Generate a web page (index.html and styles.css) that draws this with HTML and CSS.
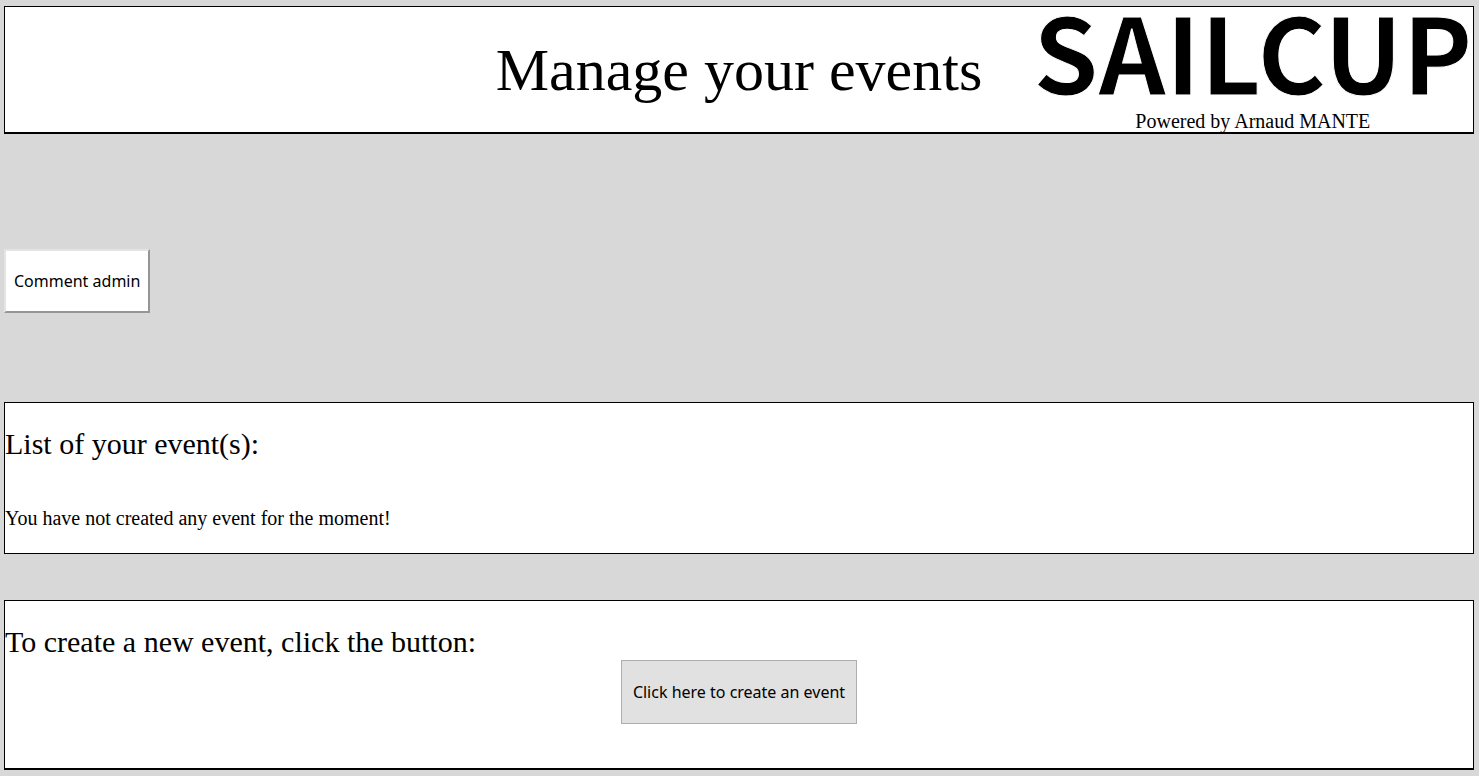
FILE: index.html
```html
<!DOCTYPE html>
<html lang="en">
<head>
    <meta charset="UTF-8">
    <meta name="viewport" content="width=device-width, initial-scale=1.0">
    <title>Manage your events</title>
    <link rel="stylesheet" href="styles.css">
</head>
<body>
    <header class="header">
        <h1 class="title">Manage your events</h1>
        <div class="brand">
            <div class="logo">SAILCUP</div>
            <div>Powered by Arnaud MANTE</div>
        </div>
    </header>

    <button type="button" class="button comment">Comment admin</button>

    <section class="box">
        <h2>List of your event(s):</h2>
        <p class="empty">You have not created any event for the moment!</p>
    </section>

    <section class="box box-create">
        <h2>To create a new event, click the button:</h2>
        <button type="button" class="button create">Click here to create an event</button>
    </section>
</body>
</html>
```
FILE: styles.css
```css
* {
    box-sizing: border-box;
}

body {
    margin: 6px 5px 6px 4px;
    background-color: #d8d8d8;
    color: black;
    font-family: "Liberation Serif", "Times New Roman", serif;
    font-size: 20px;
    line-height: 22px;
}

.header {
    display: grid;
    grid-template-columns: 30% 1fr 30%;
    background-color: white;
    border: 1px solid black;
    border-bottom-width: 2px;
}

.title {
    grid-column: 2;
    align-self: center;
    margin: 0;
    font-size: 60px;
    font-weight: normal;
    line-height: 68px;
    text-align: center;
    white-space: nowrap;
}

.brand {
    grid-column: 3;
    text-align: center;
}

.logo {
    margin-bottom: 18px;
    font-family: "Noto Sans CJK JP", sans-serif;
    font-size: 105px;
    font-weight: bold;
    line-height: 85px;
    white-space: nowrap;
    -webkit-text-stroke: 1px white; /* thins the letters a little */
}

.button {
    display: block;
    height: 64px;
    color: black;
    font-family: "Noto Sans", Tahoma, sans-serif;
    font-size: 16px;
    cursor: pointer;
}

.comment {
    margin: 115px 0 89px;
    padding: 0 8px;
    background-color: white;
    border: 2px solid;
    border-color: #e4e4e4 #959595 #959595 #e4e4e4;
}

.box {
    margin-bottom: 46px;
    padding: 24px 0;
    background-color: white;
    border: 1px solid black;
}

h2 {
    margin: 0;
    font-size: 30px;
    font-weight: normal;
    line-height: 34px;
}

.empty {
    margin: 46px 0 0;
}

.box-create {
    margin-bottom: 0;
    padding-bottom: 44px;
    border-bottom-width: 2px;
}

.create {
    margin: 1px auto 0;
    padding: 0 11px;
    background-color: #e1e1e1;
    border: 1px solid #adadad;
}
```
